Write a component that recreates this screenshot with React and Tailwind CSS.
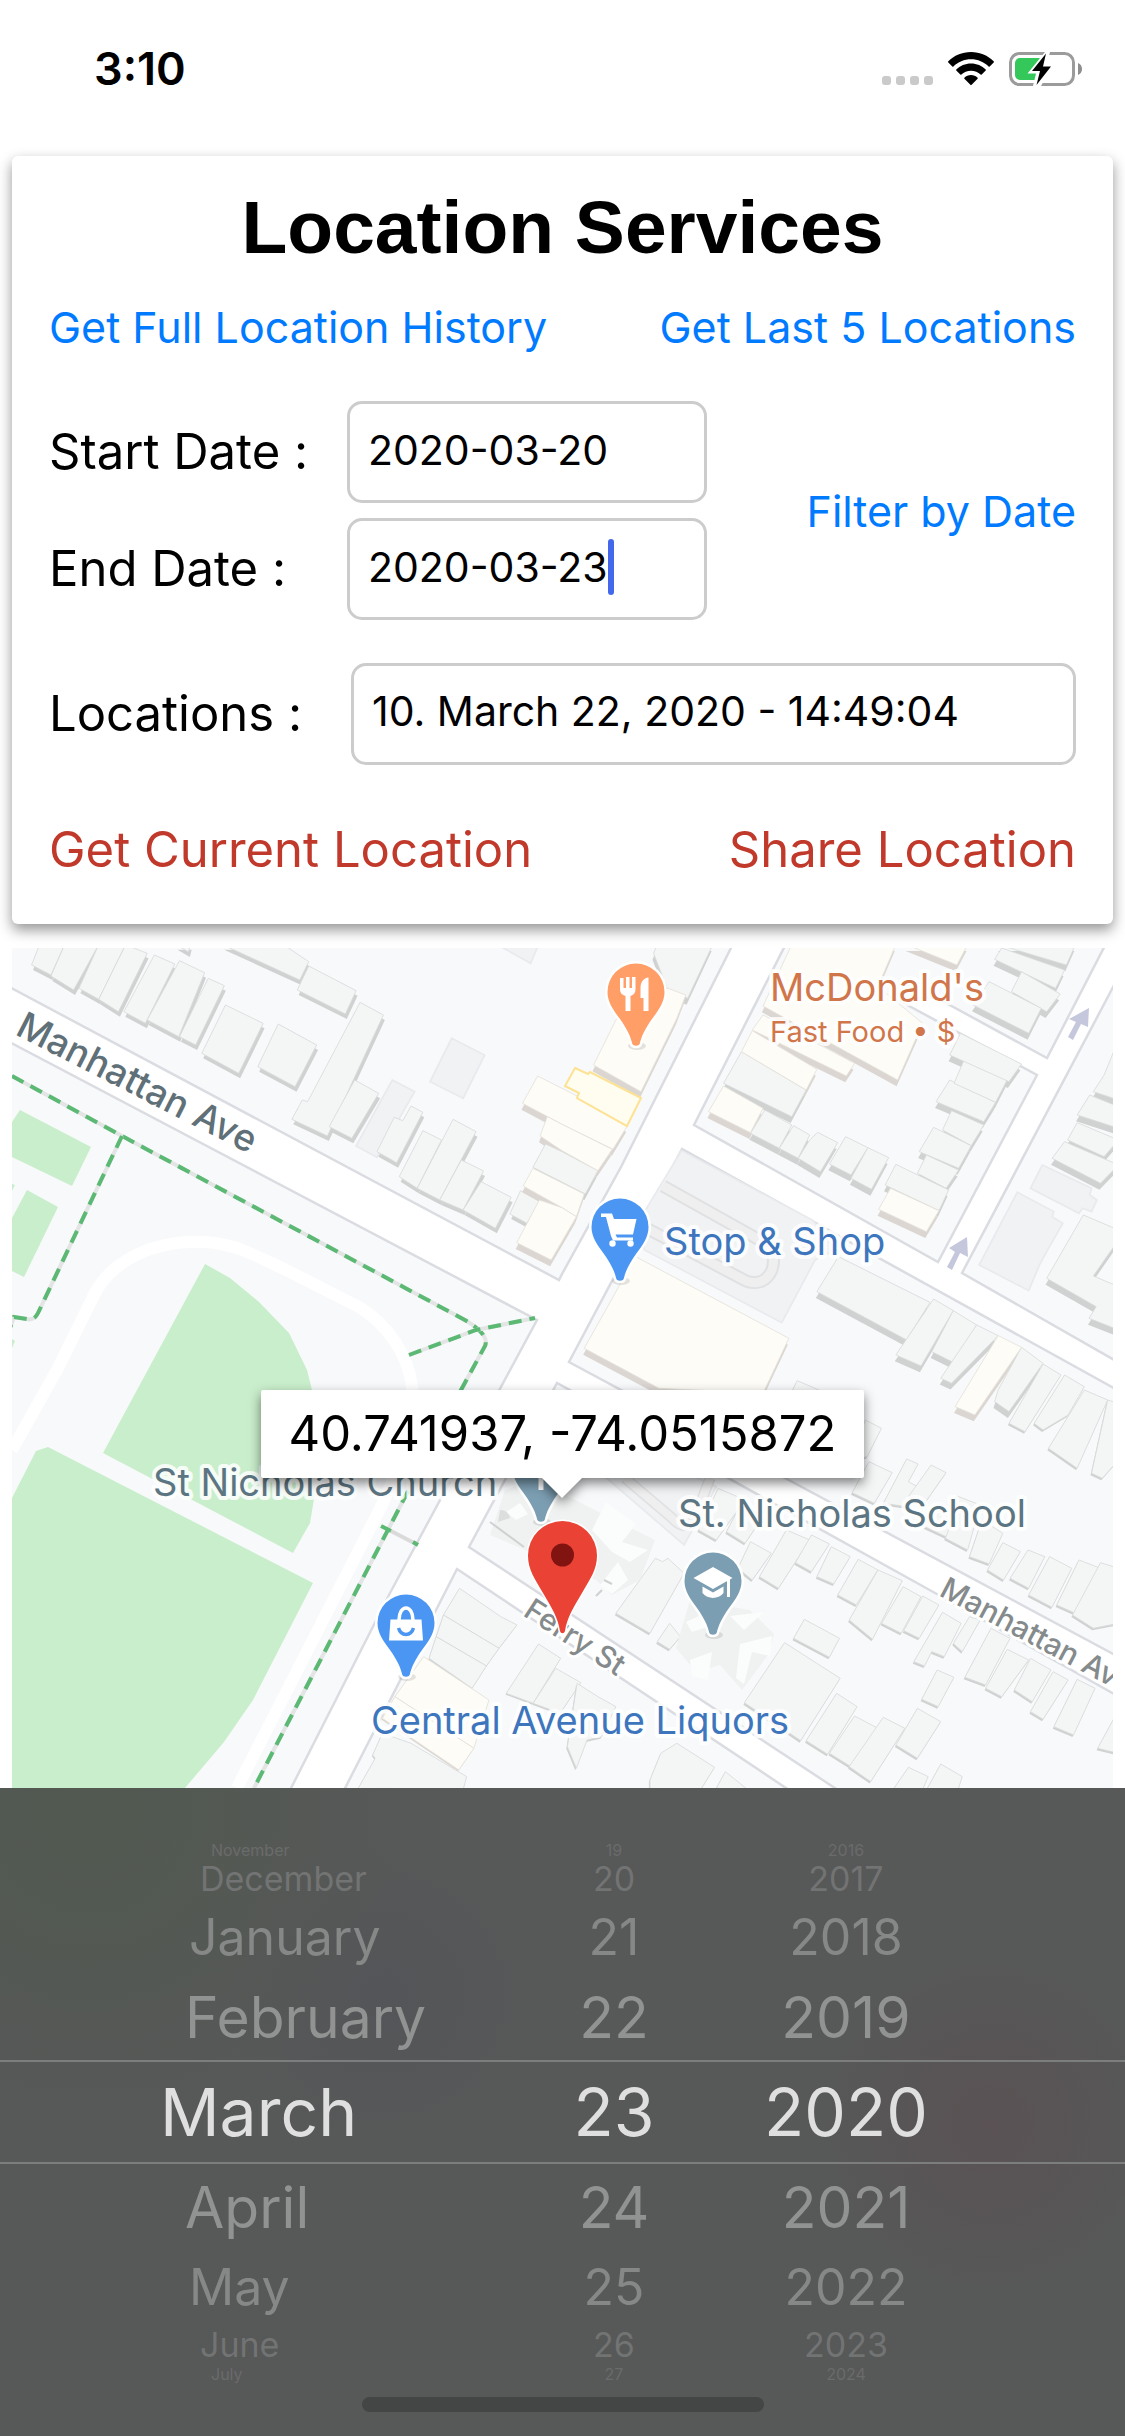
import React, { useState } from "react";

const SANS = "font-[Inter,'Liberation_Sans',sans-serif]";

/* ---------- Status bar ---------- */

function StatusBar() {
  return (
    <header className="flex h-39 items-start justify-between pt-[42px] pr-[42px] pl-[94px]">
      <time className="text-[45px] leading-[54px] font-semibold">3:10</time>
      <div className="flex items-end gap-[15px] pt-[10px]">
        <div className="flex gap-[5px] pb-px">
          <i className="size-[9px] rounded-[3px] bg-[#cacaca]" />
          <i className="size-[9px] rounded-[3px] bg-[#cacaca]" />
          <i className="size-[9px] rounded-[3px] bg-[#cacaca]" />
          <i className="size-[9px] rounded-[3px] bg-[#cacaca]" />
        </div>
        <svg className="h-[34px] w-[46px]" viewBox="0 0 46 34" aria-label="Wi-Fi">
          <path d="M23 0C14 0 6 3.600 .3 9.300a.8.8 0 0 0 0 1.100l4 4a.8.800 0 0 0 1.100 0C10 9.900 16.200 7.200 23 7.200s13 2.700 17.600 7.200a.8.800 0 0 0 1.100 0l4-4a.8.800 0 0 0 0-1.100C40 3.600 32 0 23 0Z" />
          <path d="M23 11.500c-5.700 0-10.900 2.300-14.700 6a.8.800 0 0 0 0 1.100l4 4a.8.800 0 0 0 1.100 0c2.500-2.400 5.900-3.900 9.600-3.900s7.100 1.500 9.600 3.900a.8.800 0 0 0 1.100 0l4-4a.8.800 0 0 0 0-1.100c-3.800-3.700-9-6-14.700-6Z" />
          <path d="M23 23c-2.600 0-4.900 1-6.600 2.700a.8.800 0 0 0 0 1.100l6 6a.8.800 0 0 0 1.200 0l6-6a.8.800 0 0 0 0-1.100C27.900 24 25.600 23 23 23Z" />
        </svg>
        <svg className="h-[34px] w-[74px]" viewBox="0 0 74 34" aria-label="Battery charging">
          <rect x="1.500" y="1.500" width="63" height="31" rx="9" fill="none" stroke="#9b9b9b" strokeWidth="3" />
          <path d="M69 11c2.500 1 4 3.300 4 6s-1.500 5-4 6Z" fill="#8e8e8e" />
          <rect x="6" y="6" width="28" height="22" rx="5" fill="#34c759" />
          <path d="M36 0 18.500 21.500h8.500L24 34h8L44.500 11.500H38L41 0Z" fill="#fff" />
          <path d="M37 1.500 23 19h8l-3.500 14L42 14.500h-8Z" />
        </svg>
      </div>
    </header>
  );
}

/* ---------- Form card ---------- */

const BOX =
  "h-[102px] rounded-[15px] border-[3px] border-[#cccccc] bg-white px-[18px] pb-[5px] text-[41px] text-black outline-none";
const BLUE_LINK = "text-[43px] leading-[60px] text-[#007aff]";
const RED_LINK = "text-[49px] leading-[60px] text-[#c0392b]";

function ServicesCard() {
  const [start, setStart] = useState("2020-03-20");
  const [end, setEnd] = useState("2020-03-23");
  return (
    <section className="relative z-10 mx-3 rounded-[6px] bg-white px-[37px] pt-[26px] pb-11 shadow-[0_6px_14px_rgba(0,0,0,0.42)]">
      <h1 className="text-center font-['Liberation_Sans',Arial,sans-serif] text-[75px] leading-[90px] font-bold">
        Location Services
      </h1>
      <div className="mt-[25px] flex justify-between">
        <button type="button" className={BLUE_LINK}>Get Full Location History</button>
        <button type="button" className={BLUE_LINK}>Get Last 5 Locations</button>
      </div>
      <div className="mt-11 flex items-center justify-between">
        <div className="flex flex-col gap-[15px]">
          <div className="flex items-center">
            <label htmlFor="start" className="w-[298px] text-[49px]">Start Date :</label>
            <input id="start" className={`${BOX} w-[360px]`} value={start} onChange={(e) => setStart(e.target.value)} />
          </div>
          <div className="flex items-center">
            <label htmlFor="end" className="w-[298px] text-[49px]">End Date :</label>
            <div className="relative">
              <input id="end" className={`${BOX} w-[360px]`} value={end} onChange={(e) => setEnd(e.target.value)} />
              <i className="absolute top-[21px] left-[261px] h-14 w-[6px] rounded-full bg-[#4468ec]" />
            </div>
          </div>
        </div>
        <button type="button" className={BLUE_LINK}>Filter by Date</button>
      </div>
      <div className="mt-[43px] flex items-center">
        <label htmlFor="locations" className="w-[302px] text-[49px]">Locations :</label>
        <select id="locations" className={`${BOX} min-w-0 flex-1 appearance-none`}>
          <option>10. March 22, 2020 - 14:49:04</option>
        </select>
      </div>
      <div className="mt-[55px] flex justify-between">
        <button type="button" className={RED_LINK}>Get Current Location</button>
        <button type="button" className={RED_LINK}>Share Location</button>
      </div>
    </section>
  );
}

/* ---------- Map ---------- */

const QUADRANTS = [
  {
    transform: "translate(0 940) scale(.359 .3333)",
    shift: "translate(4 15)",
    lots: ["1258,295 1350,345 1290,475 1198,425", "1093,420 1155,455 1050,652 992,618", "1385,14 1500,14 1478,70"],
    grey: [
      "110,14 180,14 142,105 88,75", "180,14 275,14 205,150 142,108", "275,14 350,14 275,178 220,145",
      "350,14 410,40 330,215 275,178", "430,45 487,72 405,250 345,215", "500,62 570,98 498,290 410,240",
      "580,115 625,137 545,315 500,290", "628,195 733,250 665,400 562,340", "775,252 882,315 822,440 718,380",
      "620,14 790,14 860,65 835,120", "860,78 992,152 962,222 828,150",
      "1003,187 1068,225 912,588 813,538 842,480 857,485", "988,420 1055,460 980,595 917,560",
      "1145,498 1178,517 1105,668 1050,635 1098,532 1122,542", "1178,572 1230,600 1162,745 1112,710",
      "1262,538 1326,575 1225,780 1162,745", "1285,660 1347,693 1290,810 1225,780",
      "1340,725 1424,772 1380,865 1290,810", "1450,752 1505,780 1468,850 1420,822", "490,14 530,14 525,36",
    ],
    cream: [],
  },
  {
    transform: "translate(562 940) scale(.359 .3333)",
    shift: "translate(-3 19)",
    lots: [
      "1338,675 1475,745 1470,765 1490,780 1475,815 1450,805 1440,820 1305,745",
      "1268,757 1370,815 1365,830 1395,850 1345,945 1330,975 1300,1052 1162,975",
      "333,632 700,842 760,930 705,960 612,1148 230,930 210,850",
    ],
    grey: [
      "265,14 420,14 350,175 295,150 255,40", "-46,612 0,635 100,692 65,762 -81,682",
      "500,335 680,450 640,530 450,430", "565,510 640,555 605,625 525,580", "645,557 690,585 658,655 605,625",
      "712,577 768,608 720,695 658,655 690,600", "790,590 852,623 805,705 745,672", "852,623 910,653 862,748 805,715",
      "930,673 1077,750 1050,812 900,735", "1015,645 1105,690 1070,745 990,700", "1035,562 1140,617 1105,685 995,635",
      "1085,512 1175,555 1140,617 1060,570", "1080,420 1208,487 1175,545 1042,485", "1120,360 1240,420 1208,487 1092,430",
      "1110,280 1280,372 1245,425 1080,345", "1235,14 1430,14 1405,75 1215,14", "1225,24 1400,90 1375,145 1205,58",
      "1280,95 1388,162 1350,215 1252,155", "1190,125 1335,205 1300,280 1145,195",
      "1550,300 1550,480 1480,455 1510,405", "1470,465 1550,500 1550,565 1435,525",
      "1435,548 1550,600 1510,650 1408,600", "1400,605 1550,675 1500,730 1365,655",
      "1452,825 1550,870 1550,900 1480,1008 1550,1040 1550,1170 1468,1135 1488,1100 1350,1015",
      "770,950 1025,1087 960,1200 710,1055", "1035,1077 1090,1112 1000,1278 930,1245",
      "1090,1112 1155,1155 1095,1270 1030,1235", "1155,1155 1215,1187 1085,1330 1055,1315",
      "1280,1222 1340,1270 1245,1415 1205,1385 1215,1350",
    ],
    cream: [
      "295,145 345,165 320,235 220,455 88,375 150,240", "-68,408 42,468 182,557 142,628 0,553 -110,490",
      "-41,530 0,553 140,628 100,692 0,632 -61,588", "-81,685 62,762 40,830 0,803 -108,738",
      "-63,780 0,803 40,830 -30,960 -126,908",
      "640,14 930,14 880,140 1005,250 935,420 560,198", "560,225 815,370 792,408 530,270",
      "530,272 710,388 680,450 500,335", "450,438 560,505 525,578 408,515",
      "915,745 1050,812 1015,875 882,808", "205,950 632,1195 560,1360 270,1345 62,1225",
      "1215,1187 1280,1222 1150,1425 1095,1400", "960,14 1130,14 1100,75",
    ],
  },
  {
    transform: "translate(0 1360) scale(.359 .3333)",
    shift: "translate(-2 4)",
    lots: [],
    grey: [
      "1235,765 1280,685 1395,770 1440,795 1390,865", "1235,765 1390,865 1355,918 1215,830",
      "1215,830 1355,918 1315,985 1195,895", "1065,1120 1145,1150 1300,1250 1290,1290 995,1290 1045,1195 1038,1185",
      "1500,852 1562,895 1485,1030 1410,1000", "1548,925 1618,968 1560,1060 1485,1030",
    ],
    cream: ["1180,890 1362,1020 1320,1165 1100,1010", "1100,1010 1320,1165 1278,1230 1065,1075"],
  },
  {
    transform: "translate(562 1360) scale(.359 .3333)",
    shift: "translate(-3 6)",
    lots: ["-20,300 125,355 340,555 430,380 370,350 140,350"],
    grey: [
      "260,595 280,605 295,595 340,640 245,820 150,760", "300,790 330,830 300,868 265,845", "435,385 510,420 430,540 380,510",
      "500,430 560,470 510,550 458,515", "525,545 583,580 530,660 490,625", "625,510 690,540 603,685 550,650",
      "695,525 745,552 695,635 650,608", "750,560 803,590 757,672 710,650", "825,598 880,630 820,735 768,705",
      "880,630 948,662 865,838 800,780", "950,680 1000,710 945,820 890,790", "1005,708 1050,735 995,835 952,812",
      "1060,757 1112,790 1065,890 1030,875 1010,918 980,905", "1135,770 1165,780 1115,875 1090,850",
      "1195,805 1248,835 1180,975 1122,952", "1240,868 1300,900 1225,1010 1180,985", "1305,895 1362,930 1310,1025 1260,990",
      "1368,935 1410,960 1340,1078 1305,1055", "1435,958 1485,985 1425,1125 1370,1100", "1045,930 1092,952 1048,1040 1002,1018",
      "675,778 773,835 745,892 645,835", "620,848 775,955 665,1142 508,1028", "765,1000 822,1040 740,1183 680,1142",
      "815,1068 880,1105 805,1220 745,1180", "895,1072 955,1105 860,1265 800,1220", "990,1045 1055,1085 990,1195 930,1155",
      "1550,1050 1550,1180 1492,1165", "965,1222 1020,1250 1000,1300 925,1284", "1055,1212 1115,1250 1100,1300 1010,1300",
      "320,1150 425,1222 380,1300 245,1300 245,1260 275,1180", "455,1235 530,1300 430,1284",
      "42,970 100,1010 150,1040 110,1130 70,1140 40,1225 15,1160",
      "655,62 720,92 690,110 640,95", "845,180 890,205 850,290 800,300", "855,305 920,338 870,430 808,398",
      "960,297 992,312 965,365 990,380 960,440 895,430",
      "1028,315 1070,338 1010,430 965,410", "1100,408 1165,435 1130,570 1068,535", "1050,430 1100,440 1070,530 1010,500",
      "1170,480 1228,520 1190,612 1135,590", "1228,548 1277,575 1230,660 1185,630", "1298,570 1345,590 1300,685 1248,655",
      "1358,590 1420,625 1365,742 1300,705", "1440,600 1500,625 1440,765 1378,735", "1500,608 1550,625 1550,790 1480,805 1422,765",
      "1340,12 1390,45 1290,215 1245,190", "1400,45 1455,80 1410,165 1340,210 1315,190",
      "1455,90 1520,120 1435,325 1355,265", "1520,120 1550,130 1550,300 1505,355 1475,340",
    ],
    cream: [],
  },
];

function Polys({ items, ...rest }) {
  return (
    <g {...rest}>
      {items.map((p) => (
        <polygon key={p} points={p} />
      ))}
    </g>
  );
}

function Quadrant({ q }) {
  return (
    <g transform={q.transform} strokeWidth="2.500">
      <Polys items={q.lots} fill="#f1f2f4" stroke="#e8eaed" strokeWidth="5" />
      <g transform={q.shift}>
        <Polys items={q.grey} fill="#d0d2d2" />
        <Polys items={q.cream} fill="#dbd6d1" />
      </g>
      <Polys items={q.grey} fill="#f4f6f6" stroke="#d9dbdb" />
      <Polys items={q.cream} fill="#fdfcf7" stroke="#e6e2da" />
    </g>
  );
}

function Pin({ x, y, color, children }) {
  return (
    <g transform={`translate(${x} ${y})`}>
      <ellipse cx="1" cy="54" rx="9" ry="4" fill="#000" opacity=".1" />
      <path
        d="M0-28.500A28.500 28.500 0 0 1 28.500 0C28.500 10 23 17.500 16 27 9 37 5.500 44 3.800 51.500 3 54.500-3 54.500-3.800 51.500-5.500 44-9 37-16 27-23 17.500-28.500 10-28.500 0A28.500 28.500 0 0 1 0-28.500Z"
        fill={color}
        stroke="#fff"
        strokeWidth="5"
        paintOrder="stroke"
      />
      {children}
    </g>
  );
}

function TrailPath({ d }) {
  return (
    <g fill="none" strokeWidth="4">
      <path d={d} stroke="#e3e4e4" />
      <path d={d} stroke="#5bb974" strokeDasharray="13 8" />
    </g>
  );
}

function MapArea() {
  return (
    <section className="relative mx-3 mt-6" aria-label="Map">
      <svg className={`block w-full ${SANS}`} viewBox="12 948 1101 840">
        <rect x="12" y="948" width="1101" height="840" fill="#fff" />
        <g fill="#f8f9fb" stroke="#dadce1" strokeWidth="2.500">
          <path d="M0 930V982L559 1280 562 1274 621 1167 740 930Z" />
          <path d="M0 1037 537 1320 390 1593 285 1800H0Z" />
          <path d="M694 1125 793 930H1113L1047 1058 935 997 898 1000 1037 1075 938 1262Z" />
          <path d="M1130 955 962 1273 1130 1369Z" />
          <path d="M682 1149 569 1362 785 1478 1130 1663V1397Z" />
          <path d="M557 1383 469 1547 850 1798H1130V1703L935 1593Z" />
          <path d="M457 1569 339 1800H804Z" />
        </g>

        <path d="M12 1450 57 1370 95 1293C112 1262 150 1240 206 1242c30 2 50 14 80 28l73 37c30 18 50 50 53 80 0 40-12 80-30 118L237 1788" fill="none" stroke="#fff" strokeWidth="12" />

        <g fill="#c9eecb">
          <path d="M20 1110 91 1147 72 1186 12 1157V1122Z" />
          <path d="M27 1190 58 1207 24 1277 12 1271V1218Z" />
          <path d="M12 1184 15 1185 12 1191ZM12 1339 15 1341 12 1348Z" />
          <path d="M205 1264 230 1278 259 1302 289 1333 307 1370 312 1390 317 1440 315 1493 310 1523 293 1553 103 1453Z" />
          <path d="M36 1451 48 1447 313 1583 253 1700 224 1742 185 1788H12V1498Z" />
        </g>

        {QUADRANTS.map((q) => (
          <Quadrant key={q.transform} q={q} />
        ))}

        <g fill="none" strokeLinejoin="round">
          <path d="M663 1186 765 1243Q777 1253 772 1270 764 1287 746 1281L648 1229" stroke="#e0e1e2" strokeWidth="13" />
          <path d="M663 1186 765 1243Q777 1253 772 1270 764 1287 746 1281L648 1229" stroke="#efefef" strokeWidth="9" />
          <path d="M625 1478 672 1518Q688 1536 698 1510L710 1478" stroke="#e0e1e2" strokeWidth="11" />
          <path d="M625 1478 672 1518Q688 1536 698 1510L710 1478" stroke="#efefef" strokeWidth="8" />
        </g>
        <path d="M575 1068 588 1074 590 1072 641 1098 627 1126 577 1098 579 1093 565 1086Z" fill="#fffdf0" stroke="#fde293" strokeWidth="2" />

        {/* church and school roofs */}
        <g fill="#f0f1f1">
          <path d="M505 1490 535 1480 655 1540 640 1580 612 1595 596 1580 490 1535Z" />
          <path d="M676 1648 690 1600 750 1610 774 1634 768 1655 742 1690 720 1665 696 1672Z" />
        </g>
        <g fill="#fbfcfc">
          <path d="M592 1530 606 1502 636 1524 622 1542 648 1550 630 1562 612 1552Z" />
          <path d="M600 1585 618 1562 628 1580 612 1594Z" />
          <path d="M686 1622 712 1610 716 1624 692 1632ZM730 1616 764 1612 744 1630ZM740 1644 772 1636 770 1656 752 1652 744 1684 736 1678ZM690 1660 712 1652 708 1680 692 1676Z" />
          <path d="M506 1512 520 1503 528 1514 516 1520Z" />
        </g>
        <path d="M490 1522 524 1547M596 1596l6-6M604 1580l8 4" fill="none" stroke="#cfd1d1" strokeWidth="2" />
        <path d="M500 1510a9 9 0 0 1 10 8l-12 4Z" fill="#dcdede" />

        <g fill="#c5c8dc">
          <path d="M1089 1008 1088 1027 1081 1024 1073 1040 1068 1037 1076 1022 1069 1019Z" />
          <path d="M967 1237 968 1257 960 1253 952 1270 947 1267 955 1252 949 1248Z" />
        </g>

        <TrailPath d="M12 1076 122 1136 463 1319Q490 1334 485 1346L461 1390 405 1497 254 1788" />
        <TrailPath d="M122 1136 38 1313Q34 1321 27 1319L14 1317 10 1328" />
        <TrailPath d="M409 1355 476 1330 535 1318" />
        <path d="M391 1531 416 1544" stroke="#dadada" strokeWidth="4" />
        <path d="M381 1526 391 1531M413 1542 418 1545" stroke="#5bb974" strokeWidth="4" />

        <g stroke="#fff" strokeWidth="6" strokeLinejoin="round" paintOrder="stroke" fill="#858b8c" fontWeight="500">
          <text transform="translate(14 1034) rotate(27)" fontSize="37" fill="#5f7078">Manhattan Ave</text>
          <text transform="translate(938 1595) rotate(28)" fontSize="30">Manhattan Ave</text>
          <text transform="translate(522 1615) rotate(33)" fontSize="30">Ferry St</text>
        </g>
        <g stroke="#fff" strokeOpacity=".85" strokeWidth="8" strokeLinejoin="round" paintOrder="stroke" fontSize="38">
          <g fill="#d1764a">
            <text x="770" y="1001">McDonald's</text>
            <text x="770" y="1042" fontSize="29">Fast Food • $</text>
          </g>
          <g fill="#3d76bd">
            <text x="664" y="1255">Stop &amp; Shop</text>
            <text x="371" y="1734">Central Avenue Liquors</text>
          </g>
          <g fill="#5c7582">
            <text x="153" y="1496">St Nicholas Church</text>
            <text x="678" y="1527">St. Nicholas School</text>
          </g>
        </g>

        <Pin x={636} y={992} color="#ff9e67">
          <path fill="#fff" d="M-16-14h3.500V-4h2.500v-11h3.500v11H-4v-11H-.500V-2.500c0 3.500-2 5.500-5 6.500v15h-5V4c-3.500-1-5.500-3-5.500-6.500ZM12.500-14.500V19h-5V6H4.500V-4c0-6 3-10 8-10.500Z" />
        </Pin>
        <Pin x={620} y={1227} color="#4b96f3">
          <path fill="#fff" d="M-19-13.500h11l2 5.500H16.500L13 7.500H-4.500l1.500 3h16v3H-7L-9 9-14-10h-5Z" />
          <circle cx="-7.500" cy="16.500" r="3.200" fill="#fff" />
          <circle cx="10.500" cy="16.500" r="3.200" fill="#fff" />
        </Pin>
        <Pin x={406} y={1623} color="#4b96f3">
          <path d="M-7-3C-7-19 7-19 7-3" fill="none" stroke="#fff" strokeWidth="3.500" />
          <path d="M-15.500-3.500h31L17 17.500h-34Z" fill="#fff" />
          <path d="M-7.500 5C-5 13.500 5 13.500 7.500 5" fill="none" stroke="#4b96f3" strokeWidth="3.500" />
        </Pin>
        <Pin x={713} y={1581} color="#7c9eb2">
          <path fill="#fff" d="M0-14 19.500-3 0 8-19.500-3ZM-10.500 5.500 0 11.500l10.500-6V12C5 18.500-5 18.500-10.500 12ZM14-2h3v18h-3Z" />
        </Pin>
        <Pin x={541} y={1468} color="#7c9eb2">
          <path fill="#fff" d="M-2.500-16h5V22h-5Z" />
        </Pin>

        <path
          d="M562.500 1521A34.500 34.500 0 0 1 597 1555.500C597 1570 590 1579 582 1593 573 1608 567 1618 565 1631 564 1634 561 1634 560 1631 558 1618 552 1608 543 1593 535 1579 528 1570 528 1555.500A34.500 34.500 0 0 1 562.500 1521Z"
          fill="#ea4335"
          stroke="#fff"
          strokeWidth="3"
          paintOrder="stroke"
        />
        <circle cx="562.500" cy="1555" r="11.500" fill="#811411" />
      </svg>

      <div className="absolute top-[442px] left-1/2 flex -translate-x-1/2 flex-col items-center drop-shadow-[0_5px_6px_rgba(0,0,0,0.5)]">
        <p className="rounded-[2px] bg-white px-7 py-3 text-[49px] leading-16 whitespace-nowrap">
          40.741937, -74.0515872
        </p>
        <svg className="h-5 w-10" viewBox="0 0 40 20" aria-hidden="true">
          <path d="M0 0H40L20 20Z" fill="#fff" />
        </svg>
      </div>
    </section>
  );
}

/* ---------- Date wheel ---------- */

const FAR = "h-4 pl-[211px] text-[16px] text-[#6a6b6b]";
const OUTER = "h-[42px] pl-[200px] text-[34px] text-[#727373]";
const MID = "h-[74px] pl-[189px] text-[50px] text-[#868787]";
const NEAR = "h-[86px] pl-[185px] text-[57px] text-[#919292]";
const ACTIVE = "h-[104px] border-y-2 border-[#7c7d7d] pl-[160px] text-[66px] text-[#dfdfdf]";

const WHEEL = [
  ["November", "19", "2016", FAR],
  ["December", "20", "2017", OUTER],
  ["January", "21", "2018", MID],
  ["February", "22", "2019", NEAR],
  ["March", "23", "2020", ACTIVE],
  ["April", "24", "2021", NEAR],
  ["May", "25", "2022", MID],
  ["June", "26", "2023", OUTER],
  ["July", "27", "2024", FAR],
];

function DateWheel() {
  return (
    <section
      aria-label="Date picker"
      className="flex flex-1 flex-col bg-[#575858] bg-[radial-gradient(circle_at_8%_4%,#515950_0%,transparent_26%),radial-gradient(circle_at_88%_52%,#5a5254_0%,transparent_16%),radial-gradient(circle_at_34%_32%,#545558_0%,transparent_18%)] pt-[54px]"
    >
      {WHEEL.map(([month, day, year, look]) => (
        <div key={month} className={`flex items-center leading-none ${look}`}>
          <button type="button" className="flex-1 text-left">{month}</button>
          <button type="button" className="w-[120px] text-center">{day}</button>
          <button type="button" className="mr-[107px] w-[344px] text-center">{year}</button>
        </div>
      ))}
      <div className="mx-auto mt-[15px] h-[15px] w-[402px] rounded-full bg-[#444545]" />
    </section>
  );
}

export default function App() {
  return (
    <main className={`flex min-h-screen flex-col overflow-hidden bg-white text-black ${SANS}`}>
      <StatusBar />
      <ServicesCard />
      <MapArea />
      <DateWheel />
    </main>
  );
}
